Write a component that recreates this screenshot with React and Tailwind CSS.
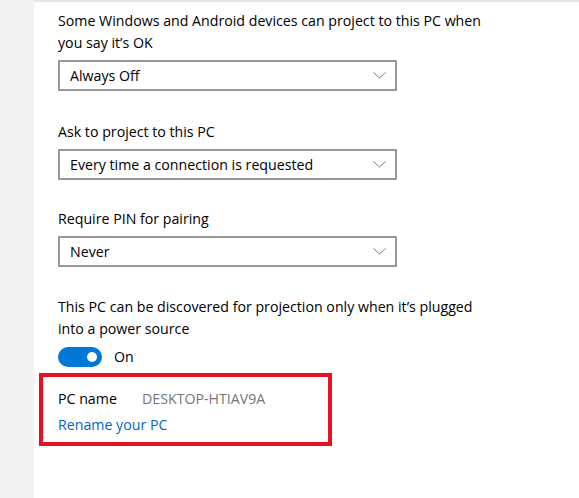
const Chevron = () => (
  <svg width="13" height="7" viewBox="0 0 13 7" className="shrink-0">
    <path d="M0.5 0.5 L6.5 6 L12.5 0.5" fill="none" stroke="#7a7a7a" strokeWidth="1" />
  </svg>
);

const Select = ({ value }) => (
  <div className="flex h-[31px] w-[339px] items-center justify-between border-2 border-[#999999] bg-white pl-[10px] pr-[9px]">
    <span className="text-[#000]">{value}</span>
    <Chevron />
  </div>
);

export default function App() {
  return (
    <div
      className="flex h-[498px] w-[579px] overflow-hidden bg-white text-black"
      style={{ fontFamily: '"Open Sans", "Noto Sans", sans-serif' }}
    >
      {/* left nav strip */}
      <div className="w-[34px] shrink-0 bg-[#f2f2f2]" />

      <div className="flex-1 border-t-2 border-[#e6e6e6] pl-[24px] pt-[8px] text-[14.2px] leading-[22px]">
        <p className="w-[440px]">
          Some Windows and Android devices can project to this PC when you say it’s OK
        </p>
        <div className="mt-[6px]">
          <Select value="Always Off" />
        </div>

        <p className="mt-[30px]">Ask to project to this PC</p>
        <div className="mt-[6px]">
          <Select value="Every time a connection is requested" />
        </div>

        <p className="mt-[28px]">Require PIN for pairing</p>
        <div className="mt-[6px]">
          <Select value="Never" />
        </div>

        <p className="mt-[29px] w-[440px]">
          This PC can be discovered for projection only when it’s plugged into a power source
        </p>

        <div className="mt-[6px] flex items-center gap-[12px]">
          <div className="flex h-[20px] w-[44px] items-center justify-end rounded-full bg-[#0078d7] pr-[5px]">
            <div className="h-[10px] w-[10px] rounded-full bg-white" />
          </div>
          <span>On</span>
        </div>

        <div className="ml-[-19px] mt-[5px] h-[73px] w-[293px] border-4 border-[#e81123] pl-[15px] pt-[11px]">
          <div className="flex">
            <span className="w-[84px]">PC name</span>
            <span className="text-[#767676]">DESKTOP-HTIAV9A</span>
          </div>
          <p className="mt-[4px] text-[#0067b8]">Rename your PC</p>
        </div>
      </div>
    </div>
  );
}
